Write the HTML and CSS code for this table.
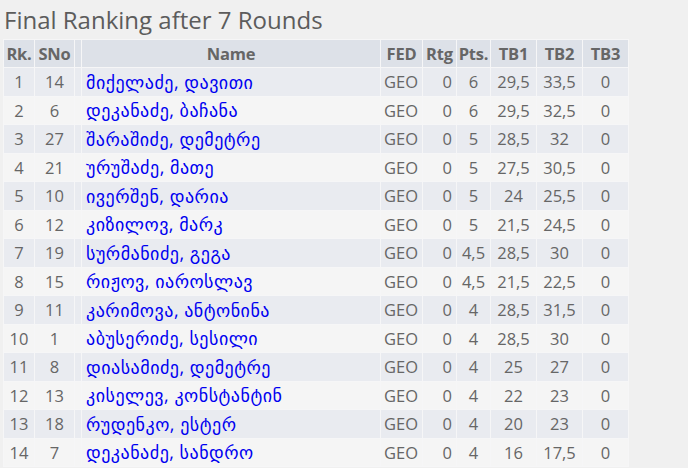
FILE: index.html
```html
<!DOCTYPE html>
<html>
<head>
<meta charset="utf-8">
<link rel="stylesheet" href="styles.css">
</head>
<body>
<h2 class="title">Final Ranking after 7 Rounds</h2>
<table class="rank">
<colgroup>
<col class="w-rk"><col class="w-sno"><col class="w-x"><col class="w-name"><col class="w-fed"><col class="w-rtg"><col class="w-pts"><col class="w-tb"><col class="w-tb"><col class="w-tb">
</colgroup>
<thead>
<tr><th>Rk.</th><th>SNo</th><th></th><th>Name</th><th>FED</th><th>Rtg</th><th>Pts.</th><th>TB1</th><th>TB2</th><th>TB3</th></tr>
</thead>
<tbody>
<tr><td class="c-rk">1</td><td class="c-sno">14</td><td></td><td class="c-name"><a>მიქელაძე, დავითი</a></td><td class="c-fed">GEO</td><td class="c-rtg">0</td><td class="c-pts">6</td><td class="c-tb">29,5</td><td class="c-tb">33,5</td><td class="c-tb">0</td></tr>
<tr><td class="c-rk">2</td><td class="c-sno">6</td><td></td><td class="c-name"><a>დეკანაძე, ბაჩანა</a></td><td class="c-fed">GEO</td><td class="c-rtg">0</td><td class="c-pts">6</td><td class="c-tb">29,5</td><td class="c-tb">32,5</td><td class="c-tb">0</td></tr>
<tr><td class="c-rk">3</td><td class="c-sno">27</td><td></td><td class="c-name"><a>შარაშიძე, დემეტრე</a></td><td class="c-fed">GEO</td><td class="c-rtg">0</td><td class="c-pts">5</td><td class="c-tb">28,5</td><td class="c-tb">32</td><td class="c-tb">0</td></tr>
<tr><td class="c-rk">4</td><td class="c-sno">21</td><td></td><td class="c-name"><a>ურუშაძე, მათე</a></td><td class="c-fed">GEO</td><td class="c-rtg">0</td><td class="c-pts">5</td><td class="c-tb">27,5</td><td class="c-tb">30,5</td><td class="c-tb">0</td></tr>
<tr><td class="c-rk">5</td><td class="c-sno">10</td><td></td><td class="c-name"><a>ივერშენ, დარია</a></td><td class="c-fed">GEO</td><td class="c-rtg">0</td><td class="c-pts">5</td><td class="c-tb">24</td><td class="c-tb">25,5</td><td class="c-tb">0</td></tr>
<tr><td class="c-rk">6</td><td class="c-sno">12</td><td></td><td class="c-name"><a>კიზილოვ, მარკ</a></td><td class="c-fed">GEO</td><td class="c-rtg">0</td><td class="c-pts">5</td><td class="c-tb">21,5</td><td class="c-tb">24,5</td><td class="c-tb">0</td></tr>
<tr><td class="c-rk">7</td><td class="c-sno">19</td><td></td><td class="c-name"><a>სურმანიძე, გეგა</a></td><td class="c-fed">GEO</td><td class="c-rtg">0</td><td class="c-pts">4,5</td><td class="c-tb">28,5</td><td class="c-tb">30</td><td class="c-tb">0</td></tr>
<tr><td class="c-rk">8</td><td class="c-sno">15</td><td></td><td class="c-name"><a>რიჟოვ, იაროსლავ</a></td><td class="c-fed">GEO</td><td class="c-rtg">0</td><td class="c-pts">4,5</td><td class="c-tb">21,5</td><td class="c-tb">22,5</td><td class="c-tb">0</td></tr>
<tr><td class="c-rk">9</td><td class="c-sno">11</td><td></td><td class="c-name"><a>კარიმოვა, ანტონინა</a></td><td class="c-fed">GEO</td><td class="c-rtg">0</td><td class="c-pts">4</td><td class="c-tb">28,5</td><td class="c-tb">31,5</td><td class="c-tb">0</td></tr>
<tr><td class="c-rk">10</td><td class="c-sno">1</td><td></td><td class="c-name"><a>აბუსერიძე, სესილი</a></td><td class="c-fed">GEO</td><td class="c-rtg">0</td><td class="c-pts">4</td><td class="c-tb">28,5</td><td class="c-tb">30</td><td class="c-tb">0</td></tr>
<tr><td class="c-rk">11</td><td class="c-sno">8</td><td></td><td class="c-name"><a>დიასამიძე, დემეტრე</a></td><td class="c-fed">GEO</td><td class="c-rtg">0</td><td class="c-pts">4</td><td class="c-tb">25</td><td class="c-tb">27</td><td class="c-tb">0</td></tr>
<tr><td class="c-rk">12</td><td class="c-sno">13</td><td></td><td class="c-name"><a>კისელევ, კონსტანტინ</a></td><td class="c-fed">GEO</td><td class="c-rtg">0</td><td class="c-pts">4</td><td class="c-tb">22</td><td class="c-tb">23</td><td class="c-tb">0</td></tr>
<tr><td class="c-rk">13</td><td class="c-sno">18</td><td></td><td class="c-name"><a>რუდენკო, ესტერ</a></td><td class="c-fed">GEO</td><td class="c-rtg">0</td><td class="c-pts">4</td><td class="c-tb">20</td><td class="c-tb">23</td><td class="c-tb">0</td></tr>
<tr><td class="c-rk">14</td><td class="c-sno">7</td><td></td><td class="c-name"><a>დეკანაძე, სანდრო</a></td><td class="c-fed">GEO</td><td class="c-rtg">0</td><td class="c-pts">4</td><td class="c-tb">16</td><td class="c-tb">17,5</td><td class="c-tb">0</td></tr>
</tbody>
</table>
</body>
</html>
```

FILE: styles.css
```css
html, body {
  margin: 0;
  padding: 0;
  background: #f0f0f0;
}
body {
  font-family: "Open Sans", "Noto Sans", "DejaVu Sans", sans-serif;
  color: #666;
  padding: 4px 0 0 3px;
}
.title {
  margin: 0 0 3px 1px;
  font-size: 24px;
  font-weight: normal;
  color: #5c5c5c;
  line-height: 32px;
}
.rank {
  table-layout: fixed;
  width: 626px;
  border-collapse: separate;
  border-spacing: 1px;
  background: #f6f6f7;
  font-size: 16.5px;
}
.w-rk { width: 30px; }
.w-sno { width: 39px; }
.w-x { width: 6px; }
.w-name { width: 298px; }
.w-fed { width: 41px; }
.w-rtg { width: 33px; }
.w-pts { width: 33px; }
.w-tb { width: 45px; }
.rank th {
  background: #dde1e8;
  color: #666;
  font-weight: bold;
  height: 27px;
  padding: 0;
  text-align: center;
  white-space: nowrap;
  letter-spacing: -0.2px;
}
.rank td {
  height: 27.5px;
  padding: 0;
  white-space: nowrap;
  text-align: center;
}
.rank tbody tr:nth-child(odd) td { background: #e9ebf0; }
.rank tbody tr:nth-child(even) td { background: #f5f5f5; }
.rank td.c-name { text-align: left; padding-left: 4px; }
.c-name a {
  color: #0000f0;
  font-family: "Open Sans", "DejaVu Sans", sans-serif;
  font-size: 18px;
  letter-spacing: 0.5px;
}
.rank td.c-fed { text-align: left; padding-left: 3px; }
.rank td.c-rtg { text-align: right; padding-right: 4px; }
```
